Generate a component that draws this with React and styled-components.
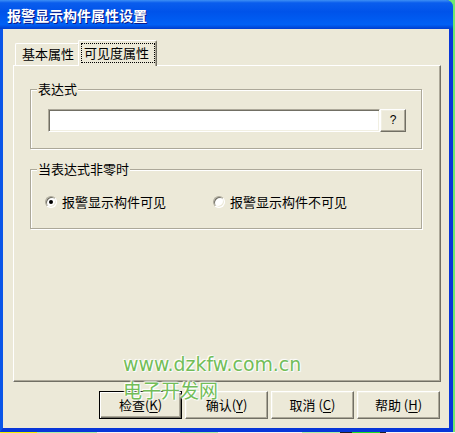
import styled, { createGlobalStyle } from 'styled-components';

const GlobalStyle = createGlobalStyle`
  html, body {
    margin: 0;
    padding: 0;
    background: #6fe86f;
  }
  * {
    box-sizing: border-box;
  }
`;

const uiFont = `"Noto Sans CJK SC", "Liberation Sans", sans-serif`;

const Page = styled.div`
  position: relative;
  width: 455px;
  height: 433px;
  overflow: hidden;
  background: #6fe86f;
  font-family: ${uiFont};
  font-size: 13px;
  color: #000;
`;

const Window = styled.div`
  display: flex;
  flex-direction: column;
  width: 453px;
  height: 432px;
  background: #0a4fe0;
  border-top-right-radius: 7px;
  overflow: hidden;
`;

const TitleBar = styled.div`
  display: flex;
  align-items: center;
  height: 29px;
  padding: 1px 0 0 7px;
  background: linear-gradient(
    180deg,
    #3d8ff5 0%,
    #0a5ded 10%,
    #0053ea 40%,
    #0060f5 85%,
    #0050e2 92%,
    #003dcf 100%
  );
  color: #fff;
  font-size: 14px;
  font-weight: 700;
  text-shadow: 1px 1px 0 #0a1a8a;
`;

const Frame = styled.div`
  flex: 1;
  display: flex;
  flex-direction: column;
  border-style: solid;
  border-width: 0 4px 4px 3px;
  border-color: #0a55e8 #0836d8 #0836d8 #0a55e8;
`;

const Body = styled.div`
  flex: 1;
  display: flex;
  flex-direction: column;
  padding: 11px 8px 9px 10px;
  background: #ece9d8;
`;

const TabRow = styled.div`
  display: flex;
  align-items: flex-end;
  height: 25px;
  margin-left: 2px;
`;

const Tab = styled.div`
  position: relative;
  height: ${p => (p.$active ? '26px' : '22px')};
  margin: ${p => (p.$active ? '0 -2px -1px -2px' : '0')};
  padding: ${p => (p.$active ? '2px 1px 0 2px' : '1px 5px 0 6px')};
  z-index: ${p => (p.$active ? 1 : 0)};
  background: #ece9d8;
  border-style: solid;
  border-width: 1px 1px 0 1px;
  border-color: #fff #716f64 #ece9d8 #fff;
  border-top-left-radius: 2px;
  border-top-right-radius: 2px;
  box-shadow: inset -1px 0 0 #aca899;
  line-height: 18px;
  white-space: nowrap;
`;

const FocusRing = styled.span`
  display: block;
  height: 20px;
  padding: 0 5px 0 2px;
  border: 1px dotted #000;
  line-height: 18px;
`;

const Panel = styled.div`
  display: flex;
  flex-direction: column;
  gap: 20px;
  height: 317px;
  padding: 23px 18px 0 16px;
  border-style: solid;
  border-width: 1px;
  border-color: #fff #716f64 #716f64 #fff;
  box-shadow: inset -1px -1px 0 #aca899;
`;

const Group = styled.div`
  position: relative;
  height: 60px;
  padding: ${p => p.$pad};
  border: 1px solid #aca899;
  box-shadow: inset 1px 1px 0 #fff, 1px 1px 0 #fff;
`;

const Legend = styled.span`
  position: absolute;
  top: -10px;
  left: 6px;
  padding: 0 1px;
  background: #ece9d8;
  line-height: 18px;
  white-space: nowrap;
`;

const FieldRow = styled.div`
  display: flex;
  height: 23px;
`;

const TextField = styled.input`
  flex: 1;
  min-width: 0;
  height: 23px;
  margin: 0;
  padding: 2px 3px;
  font-family: ${uiFont};
  font-size: 13px;
  background: #fff;
  border-style: solid;
  border-width: 1px;
  border-color: #aca899 #fff #fff #aca899;
  box-shadow: inset 1px 1px 0 #716f64, inset -1px -1px 0 #f1efe2;
  outline: none;
`;

const HelpButton = styled.button`
  width: 26px;
  height: 23px;
  margin: 0;
  padding: 0 0 1px 0;
  background: #ece9d8;
  font-family: "Liberation Sans", "DejaVu Sans", sans-serif;
  font-size: 12px;
  color: #000;
  border-style: solid;
  border-width: 1px;
  border-color: #fff #716f64 #716f64 #fff;
  box-shadow: inset -1px -1px 0 #aca899, inset 1px 1px 0 #f1efe2;
`;

const RadioRow = styled.div`
  display: flex;
  align-items: center;
  gap: 47px;
  height: 18px;
`;

const RadioItem = styled.label`
  display: flex;
  align-items: center;
  gap: 5px;
  line-height: 18px;
  white-space: nowrap;
`;

const RadioCircle = styled.span`
  display: flex;
  align-items: center;
  justify-content: center;
  width: 12px;
  height: 12px;
  border-radius: 50%;
  background: #fff;
  border-style: solid;
  border-width: 1px;
  border-color: #aca899 #fff #fff #aca899;
  box-shadow: inset 1px 1px 0 #716f64, inset -1px -1px 0 #ece9d8;
`;

const RadioDot = styled.span`
  width: 4px;
  height: 4px;
  border-radius: 50%;
  background: #000;
`;

const ButtonRow = styled.div`
  display: flex;
  justify-content: flex-end;
  gap: 3px;
  margin-top: 9px;
  padding-right: 1px;
`;

const DialogButton = styled.button`
  width: 83px;
  height: 28px;
  margin: 0;
  padding: 0 0 1px 0;
  background: #ece9d8;
  font-family: ${uiFont};
  font-size: 13px;
  color: #000;
  border-style: solid;
  border-width: 1px;
  border-color: ${p => (p.$default ? '#000' : '#fff #716f64 #716f64 #fff')};
  box-shadow: ${p =>
    p.$default
      ? 'inset 1px 1px 0 #fff, inset -1px -1px 0 #716f64, inset -2px -2px 0 #aca899'
      : 'inset -1px -1px 0 #aca899, inset 1px 1px 0 #f1efe2'};
  white-space: nowrap;

  u {
    text-decoration: underline;
    text-underline-offset: 2px;
  }
`;

// site watermark stamped over the screenshot
const Watermark = styled.div`
  position: absolute;
  left: 123px;
  top: 355px;
  display: flex;
  flex-direction: column;
  pointer-events: none;
  color: #72bd58;
  text-shadow: 0 0 2px #fff, 0 0 2px #fff, 1px 1px 1px #fff, -1px -1px 1px #fff;
`;

const WatermarkUrl = styled.span`
  font-family: "DejaVu Sans", sans-serif;
  font-size: 18.9px;
  line-height: 18px;
`;

const WatermarkName = styled.span`
  margin-top: 7px;
  font-family: "Noto Sans CJK SC", sans-serif;
  font-size: 19px;
  line-height: 19px;
`;

const TaskStrip = styled.div`
  height: 1px;
  background: linear-gradient(
    to right,
    #f2f200 0 37px,
    #a9f0a9 37px 97px,
    #f4f4f4 97px 180px,
    #a9f0a9 180px 218px,
    #f4f4f4 218px 302px,
    #a9f0a9 302px 340px,
    #222 340px 352px,
    #22e022 352px 380px,
    #222 380px 386px,
    #f4f4f4 386px
  );
`;

const options = ['报警显示构件可见', '报警显示构件不可见'];

const buttons = [
  { label: '检查', key: 'K', gap: '', isDefault: true },
  { label: '确认', key: 'Y', gap: '' },
  { label: '取消', key: 'C', gap: ' ' },
  { label: '帮助', key: 'H', gap: ' ' },
];

const App = () => {
  return (
    <Page>
      <GlobalStyle />
      <Window>
        <TitleBar>报警显示构件属性设置</TitleBar>
        <Frame>
          <Body>
            <TabRow>
              <Tab>基本属性</Tab>
              <Tab $active>
                <FocusRing>可见度属性</FocusRing>
              </Tab>
            </TabRow>
            <Panel>
              <Group $pad="19px 15px 16px 17px">
                <Legend>表达式</Legend>
                <FieldRow>
                  <TextField defaultValue="" />
                  <HelpButton>?</HelpButton>
                </FieldRow>
              </Group>
              <Group $pad="23px 15px 17px 14px">
                <Legend>当表达式非零时</Legend>
                <RadioRow>
                  {options.map((text, i) => (
                    <RadioItem key={text}>
                      <RadioCircle>{i === 0 && <RadioDot />}</RadioCircle>
                      {text}
                    </RadioItem>
                  ))}
                </RadioRow>
              </Group>
            </Panel>
            <ButtonRow>
              {buttons.map(b => (
                <DialogButton key={b.key} $default={b.isDefault}>
                  {b.label}
                  {b.gap}(<u>{b.key}</u>)
                </DialogButton>
              ))}
            </ButtonRow>
          </Body>
        </Frame>
      </Window>
      <TaskStrip />
      <Watermark>
        <WatermarkUrl>www.dzkfw.com.cn</WatermarkUrl>
        <WatermarkName>电子开发网</WatermarkName>
      </Watermark>
    </Page>
  );
};

export default App;
